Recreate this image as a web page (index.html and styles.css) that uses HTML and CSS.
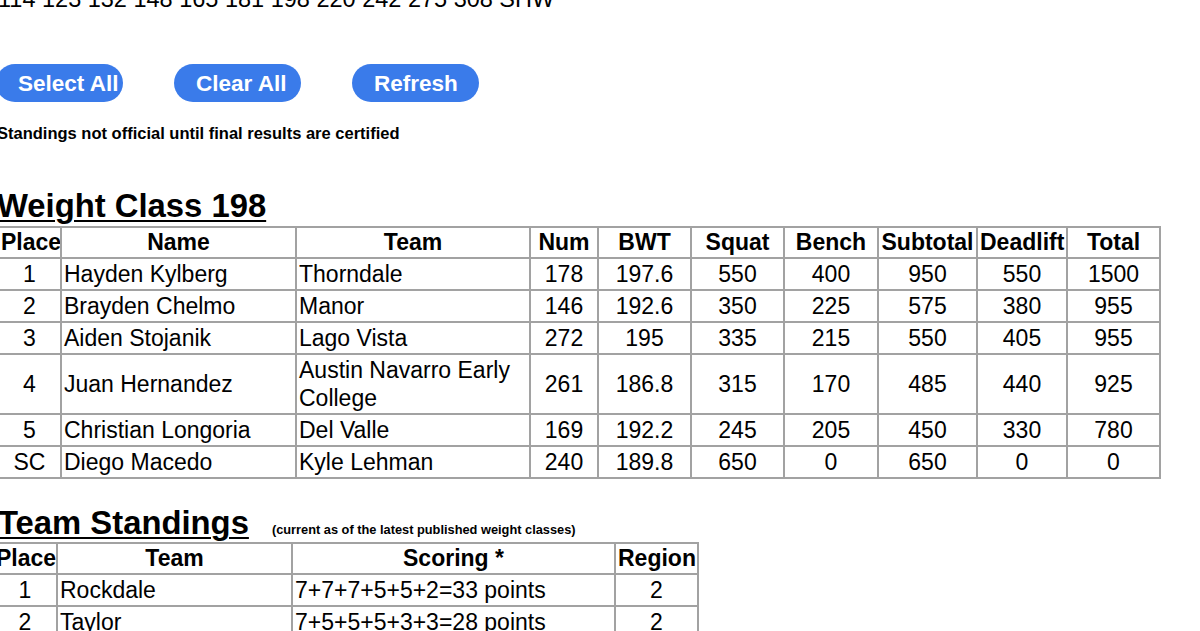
FILE: index.html
```html
<!DOCTYPE html>
<html lang="en">
<head>
<meta charset="utf-8">
<title>Weight Class 198</title>
<link rel="stylesheet" href="styles.css">
</head>
<body>
<div class="page">
  <div class="classes">114 123 132 148 165 181 198 220 242 275 308 SHW</div>
  <div class="actions">
    <button class="btn" type="button">Select All</button>
    <button class="btn" type="button">Clear All</button>
    <button class="btn" type="button">Refresh</button>
  </div>
  <p class="note">Standings not official until final results are certified</p>

  <h2 class="section-title"><span class="title-text">Weight Class 198</span></h2>
  <table class="grid results">
    <colgroup>
      <col class="c-place"><col class="c-name"><col class="c-team"><col class="c-num">
      <col class="c-bwt"><col class="c-squat"><col class="c-bench"><col class="c-sub">
      <col class="c-dead"><col class="c-total">
    </colgroup>
    <thead>
      <tr><th>Place</th><th>Name</th><th>Team</th><th>Num</th><th>BWT</th><th>Squat</th><th>Bench</th><th>Subtotal</th><th>Deadlift</th><th>Total</th></tr>
    </thead>
    <tbody>
      <tr><td class="ctr">1</td><td>Hayden Kylberg</td><td>Thorndale</td><td class="ctr">178</td><td class="ctr">197.6</td><td class="ctr">550</td><td class="ctr">400</td><td class="ctr">950</td><td class="ctr">550</td><td class="ctr">1500</td></tr>
      <tr><td class="ctr">2</td><td>Brayden Chelmo</td><td>Manor</td><td class="ctr">146</td><td class="ctr">192.6</td><td class="ctr">350</td><td class="ctr">225</td><td class="ctr">575</td><td class="ctr">380</td><td class="ctr">955</td></tr>
      <tr><td class="ctr">3</td><td>Aiden Stojanik</td><td>Lago Vista</td><td class="ctr">272</td><td class="ctr">195</td><td class="ctr">335</td><td class="ctr">215</td><td class="ctr">550</td><td class="ctr">405</td><td class="ctr">955</td></tr>
      <tr><td class="ctr">4</td><td>Juan Hernandez</td><td>Austin Navarro Early College</td><td class="ctr">261</td><td class="ctr">186.8</td><td class="ctr">315</td><td class="ctr">170</td><td class="ctr">485</td><td class="ctr">440</td><td class="ctr">925</td></tr>
      <tr><td class="ctr">5</td><td>Christian Longoria</td><td>Del Valle</td><td class="ctr">169</td><td class="ctr">192.2</td><td class="ctr">245</td><td class="ctr">205</td><td class="ctr">450</td><td class="ctr">330</td><td class="ctr">780</td></tr>
      <tr><td class="ctr">SC</td><td>Diego Macedo</td><td>Kyle Lehman</td><td class="ctr">240</td><td class="ctr">189.8</td><td class="ctr">650</td><td class="ctr">0</td><td class="ctr">650</td><td class="ctr">0</td><td class="ctr">0</td></tr>
    </tbody>
  </table>

  <h2 class="section-title team-title"><span class="title-text">Team Standings</span><span class="sub">(current as of the latest published weight classes)</span></h2>
  <table class="grid standings">
    <colgroup>
      <col class="s-place"><col class="s-team"><col class="s-scoring"><col class="s-region">
    </colgroup>
    <thead>
      <tr><th>Place</th><th>Team</th><th>Scoring *</th><th>Region</th></tr>
    </thead>
    <tbody>
      <tr><td class="ctr">1</td><td>Rockdale</td><td>7+7+7+5+5+2=33 points</td><td class="ctr">2</td></tr>
      <tr><td class="ctr">2</td><td>Taylor</td><td>7+5+5+5+3+3=28 points</td><td class="ctr">2</td></tr>
    </tbody>
  </table>
</div>
</body>
</html>
```

FILE: styles.css
```css
html, body {
  margin: 0;
  padding: 0;
  background: #ffffff;
  overflow: hidden;
}

body {
  font-family: "Liberation Sans", Arial, Helvetica, sans-serif;
  color: #000000;
}

.page {
  margin-left: -3px;
  margin-top: -15px;
}

.classes {
  font-size: 23.5px;
  line-height: 28px;
  height: 28px;
  margin-left: 1px;
}

.actions {
  display: flex;
  gap: 51px;
  margin-top: 51px;
  margin-left: -1px;
}

.btn {
  box-sizing: border-box;
  width: 127px;
  height: 38px;
  padding: 0 0 0 22px;
  border: none;
  border-radius: 19px;
  background: #3a7bea;
  color: #ffffff;
  font-family: "Liberation Sans", Arial, Helvetica, sans-serif;
  font-weight: bold;
  font-size: 22.5px;
  line-height: 39px;
  text-align: left;
  white-space: nowrap;
  overflow: hidden;
}

.note {
  margin: 21px 0 0 0;
  font-size: 16.5px;
  line-height: 20px;
  font-weight: bold;
}

.section-title {
  margin: 45px 0 0 0;
  font-size: 32.8px;
  line-height: 36px;
  font-weight: bold;
}

.title-text {
  text-decoration: underline;
  text-decoration-thickness: 2px;
  text-underline-offset: 3px;
}

.team-title {
  margin-top: 26px;
  margin-left: 1px;
}

.sub {
  font-size: 12.8px;
  line-height: 1;
  margin-left: 23px;
  vertical-align: 0;
}

.grid {
  border-collapse: collapse;
  table-layout: fixed;
  margin-top: 2px;
  font-size: 23px;
  line-height: 28px;
}

.grid th,
.grid td {
  border: 2px solid #a2a2a2;
  padding: 1px 2px;
  overflow: hidden;
}

.grid th {
  font-weight: bold;
  text-align: center;
  white-space: nowrap;
  padding: 0 2px 1px;
}

.grid td {
  text-align: left;
}

.grid td.ctr {
  text-align: center;
}

.results { width: 1162px; }
.c-place { width: 63px; }
.c-name { width: 235px; }
.c-team { width: 234px; }
.c-num { width: 68px; }
.c-bwt { width: 93px; }
.c-squat { width: 93px; }
.c-bench { width: 94px; }
.c-sub { width: 99px; }
.c-dead { width: 90px; }
.c-total { width: 93px; }

.standings {
  width: 705px;
  margin-left: -5px;
  margin-top: 1px;
}
.s-place { width: 64px; }
.s-team { width: 235px; }
.s-scoring { width: 323px; }
.s-region { width: 83px; }
```
